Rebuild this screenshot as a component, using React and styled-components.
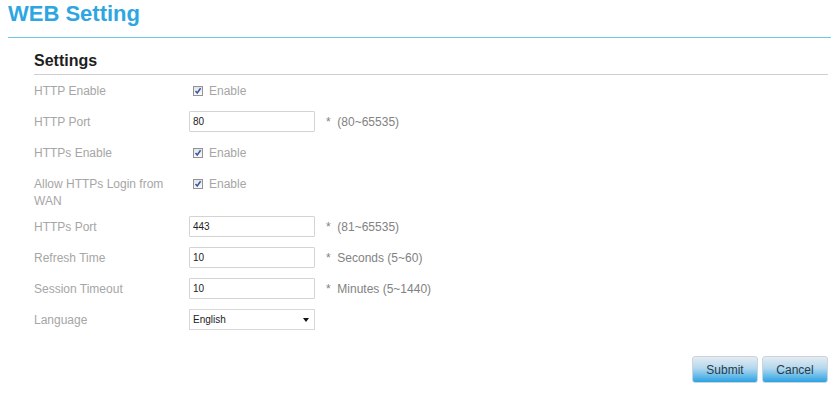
import React from 'react'
import styled, { createGlobalStyle } from 'styled-components'

const GlobalStyle = createGlobalStyle`
    html, body {
        margin: 0;
        padding: 0;
        background: #fff;
        font-family: "Liberation Sans", Arial, sans-serif;
    }
`;

const Page = styled.div`
    width: 831px;
    height: 398px;
    overflow: hidden;
    padding-left: 8px;
    box-sizing: border-box;
`;

const Title = styled.h1`
    margin: 0;
    padding-top: 1px;
    height: 36px;
    font-size: 22px;
    line-height: 26px;
    font-weight: bold;
    color: #2ea6e1;
    border-bottom: 1px solid #6fc8e8;
`;

const Section = styled.div`
    padding: 13px 3px 0 26px;
`;

const SectionTitle = styled.h2`
    margin: 0;
    font-size: 16px;
    line-height: 20px;
    font-weight: bold;
    color: #1e1e1e;
    padding-bottom: 3px;
    border-bottom: 1px solid #cfcfcf;
`;

const Row = styled.div`
    display: grid;
    grid-template-columns: 155px auto;
    align-items: start;
    padding: 5px 0;
`;

const Label = styled.div`
    font-size: 12px;
    line-height: 17px;
    color: #a6a6a6;
    padding-top: 3px;
    margin-bottom: ${p => (p.$wrap ? '-4px' : '0')};
    padding-right: 8px;
`;

const Field = styled.div`
    display: flex;
    align-items: center;
    min-height: 21px;
`;

const TextInput = styled.input`
    box-sizing: border-box;
    width: 126px;
    height: 21px;
    margin: 0;
    padding: 0 3px;
    border: 1px solid #d4d4d4;
    border-radius: 1px;
    font-family: "Liberation Sans", Arial, sans-serif;
    font-size: 10px;
    color: #222;
    outline: none;
`;

const Note = styled.span`
    margin-left: 11px;
    font-size: 12px;
    color: #828282;
    white-space: pre;
`;

const CheckWrap = styled.label`
    display: flex;
    align-items: center;
    gap: 6px;
    margin-left: 4px;
    height: 21px;
    font-size: 12px;
    color: #a6a6a6;
`;

const Box = styled.span`
    display: inline-flex;
    align-items: center;
    justify-content: center;
    width: 8px;
    height: 8px;
    border: 1px solid #939393;
    background: linear-gradient(#e4e4e4, #fafafa);
`;

const Select = styled.div`
    box-sizing: border-box;
    width: 126px;
    height: 21px;
    display: flex;
    align-items: center;
    justify-content: space-between;
    padding: 0 4px 0 3px;
    border: 1px solid #d8d8d8;
    font-size: 10px;
    color: #222;
`;

const Arrow = styled.span`
    width: 0;
    height: 0;
    border-left: 3px solid transparent;
    border-right: 3px solid transparent;
    border-top: 4px solid #111;
    margin-right: 1px;
`;

const Buttons = styled.div`
    display: flex;
    justify-content: flex-end;
    gap: 4px;
    margin-top: 21px;
`;

const Button = styled.button`
    width: ${p => p.$w}px;
    height: 27px;
    margin: 0;
    padding: 0;
    border: 1px solid #c8d5e0;
    border-radius: 3px;
    background: linear-gradient(#e6ebf0 0%, #b2d8ef 45%, #2aa3e4 100%);
    font-family: "Liberation Sans", Arial, sans-serif;
    font-size: 12px;
    color: #2b3a46;
`;

const Check = () => (
    <Box>
        <svg width="8" height="8" viewBox="0 0 8 8">
            <path d="M1.5 4 L3.2 6 L6.6 1.2" fill="none" stroke="#3a56a6" strokeWidth="1.5" />
        </svg>
    </Box>
);

const CheckField = () => (
    <Field>
        <CheckWrap><Check />Enable</CheckWrap>
    </Field>
);

const InputField = ({ value, note }) => (
    <Field>
        <TextInput defaultValue={value} />
        <Note>{note}</Note>
    </Field>
);

const App = () => {
    return (
        <Page>
            <GlobalStyle />
            <Title>WEB Setting</Title>
            <Section>
                <SectionTitle>Settings</SectionTitle>
                <Row>
                    <Label>HTTP Enable</Label>
                    <CheckField />
                </Row>
                <Row>
                    <Label>HTTP Port</Label>
                    <InputField value="80" note="*  (80~65535)" />
                </Row>
                <Row>
                    <Label>HTTPs Enable</Label>
                    <CheckField />
                </Row>
                <Row>
                    <Label $wrap>Allow HTTPs Login from WAN</Label>
                    <CheckField />
                </Row>
                <Row>
                    <Label>HTTPs Port</Label>
                    <InputField value="443" note="*  (81~65535)" />
                </Row>
                <Row>
                    <Label>Refresh Time</Label>
                    <InputField value="10" note="*  Seconds (5~60)" />
                </Row>
                <Row>
                    <Label>Session Timeout</Label>
                    <InputField value="10" note="*  Minutes (5~1440)" />
                </Row>
                <Row>
                    <Label>Language</Label>
                    <Field>
                        <Select>English<Arrow /></Select>
                    </Field>
                </Row>
                <Buttons>
                    <Button $w={66}>Submit</Button>
                    <Button $w={66}>Cancel</Button>
                </Buttons>
            </Section>
        </Page>
    )
}

export default App;
